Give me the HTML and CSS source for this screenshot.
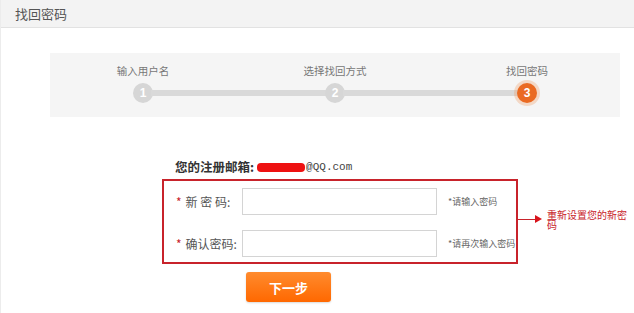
FILE: index.html
```html
<!DOCTYPE html>
<html lang="zh-CN">
<head>
    <meta charset="UTF-8">
    <title>找回密码</title>
    <link rel="stylesheet" href="styles.css">
</head>
<body>
    <div class="page">
        <div class="head">找回密码</div>

        <!-- step progress -->
        <div class="steps">
            <div class="step-labels">
                <span>输入用户名</span>
                <span>选择找回方式</span>
                <span>找回密码</span>
            </div>
            <div class="step-track">
                <span class="dot">1</span>
                <span class="line"></span>
                <span class="dot">2</span>
                <span class="line"></span>
                <span class="dot active">3</span>
            </div>
        </div>

        <div class="main">
            <div class="email">您的注册邮箱:<span class="mask"></span><span class="mail">@QQ.com</span></div>

            <div class="form-row">
                <form class="pwd-box">
                    <div class="field">
                        <label><em>*</em>新&nbsp;密&nbsp;码:</label>
                        <input type="password">
                        <span class="hint">*请输入密码</span>
                    </div>
                    <div class="field">
                        <label><em>*</em>确认密码:</label>
                        <input type="password">
                        <span class="hint">*请再次输入密码</span>
                    </div>
                </form>
                <div class="note">
                    <span class="arrow"></span>
                    <span class="note-text">重新设置您的新密码</span>
                </div>
            </div>

            <button type="button" class="next-btn">下一步</button>
        </div>
    </div>
</body>
</html>
```

FILE: styles.css
```css
html, body {
    height: 100%;
}

body {
    margin: 0;
    font-family: "Noto Sans CJK SC", "Noto Sans", sans-serif;
    font-size: 12px;
    color: #333;
    background: #fff;
}

.page {
    height: 100%;
    border-left: 1px solid #ececec;
    box-sizing: border-box;
}

.head {
    height: 27px;
    line-height: 27px;
    padding-left: 14px;
    background: #f3f3f3;
    border-bottom: 1px solid #e2e2e2;
    font-size: 13px;
    color: #555;
}

.steps {
    width: 570px;
    height: 64px;
    margin: 25px 0 0 49px;
    padding: 11px 53px 0;
    box-sizing: border-box;
    background: #f5f5f5;
}

.step-labels {
    display: flex;
    justify-content: space-between;
    font-size: 10.5px;
    line-height: 14px;
    color: #777;
}

.step-labels span {
    width: 80px;
    text-align: center;
}

.step-track {
    display: flex;
    align-items: center;
    padding: 0 30px;
    margin-top: 5px;
}

.dot {
    width: 20px;
    height: 20px;
    border-radius: 50%;
    background: #d6d6d6;
    color: #fff;
    font: bold 12px/20px "Liberation Sans", sans-serif;
    text-align: center;
    flex: none;
}

.dot.active {
    background: #ea6a22;
    box-shadow: 0 0 0 3px rgba(240, 150, 90, 0.3);
}

.line {
    flex: 1;
    height: 6px;
    background: #d9d9d9;
    margin: 0 -2px;
}

.main {
    padding-left: 161px;
}

.email {
    margin: 42px 0 4px 13px;
    height: 16px;
    line-height: 16px;
    font-size: 12.5px;
    font-weight: bold;
    color: #333;
    display: flex;
    align-items: center;
}

.mask {
    display: inline-block;
    width: 48px;
    height: 9px;
    margin-left: 3px;
    background: #ee1111;
    border-radius: 4px;
}

.mail {
    font: 11px "Liberation Mono", monospace;
    color: #444;
    margin-left: 1px;
}

.form-row {
    display: flex;
    align-items: center;
}

.pwd-box {
    flex: none;
    width: 356px;
    height: 85px;
    box-sizing: border-box;
    border: 2px solid #c8232b;
    padding: 7px 0 0 12px;
    margin: 0;
}

.field {
    display: flex;
    align-items: center;
    height: 27px;
    margin-bottom: 15px;
}

.field label {
    flex: none;
    width: 66px;
    color: #555;
    font-size: 12px;
}

.field label em {
    font-style: normal;
    color: #c8232b;
    margin-right: 4px;
}

.field input {
    flex: none;
    width: 195px;
    height: 27px;
    box-sizing: border-box;
    border: 1px solid #d4d4d4;
    margin: 0;
    padding: 0 6px;
}

.hint {
    flex: none;
    margin-left: 11px;
    font-size: 9px;
    white-space: nowrap;
    color: #666;
}

.note {
    display: flex;
    align-items: center;
    margin-top: -4px;
}

.arrow {
    width: 18px;
    height: 1px;
    background: #c8232b;
    margin-right: 11px;
    position: relative;
}

.arrow::after {
    content: "";
    position: absolute;
    right: -6px;
    top: -4px;
    border-left: 7px solid #d8141c;
    border-top: 4px solid transparent;
    border-bottom: 4px solid transparent;
}

.note-text {
    width: 82px;
    font-size: 10px;
    line-height: 10px;
    color: #c8232b;
}

.next-btn {
    display: block;
    width: 85px;
    height: 30px;
    margin: 8px 0 0 84px;
    border: none;
    border-radius: 3px;
    background: linear-gradient(#ff8b2e, #ff6800);
    box-shadow: 0 1px 2px rgba(0, 0, 0, 0.15);
    color: #fff;
    font-family: "Noto Sans CJK SC", sans-serif;
    font-size: 13px;
    font-weight: bold;
    cursor: pointer;
}
```
